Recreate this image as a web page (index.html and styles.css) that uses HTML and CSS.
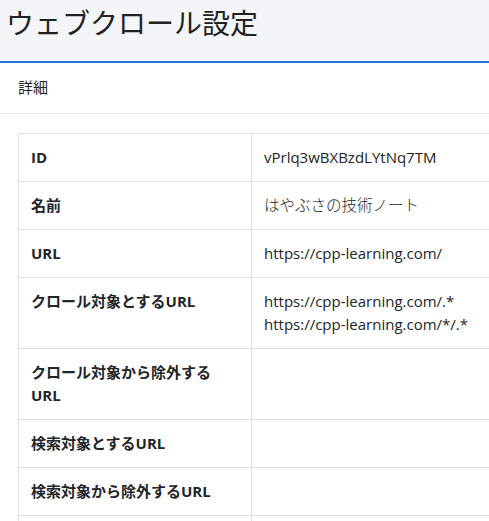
FILE: index.html
```html
<!DOCTYPE html>
<html lang="ja">
<head>
<meta charset="utf-8">
<title>ウェブクロール設定</title>
<link rel="stylesheet" href="styles.css">
</head>
<body>
<div class="page">
  <header class="page-header">
    <h1 class="page-title">ウェブクロール設定</h1>
  </header>
  <section class="card">
    <div class="card-header">詳細</div>
    <div class="card-body">
      <table class="detail-table">
        <tbody>
          <tr><th>ID</th><td>vPrlq3wBXBzdLYtNq7TM</td></tr>
          <tr><th>名前</th><td class="jp">はやぶさの技術ノート</td></tr>
          <tr><th>URL</th><td>https://cpp-learning.com/</td></tr>
          <tr><th>クロール対象とするURL</th><td>https://cpp-learning.com/.*<br>https://cpp-learning.com/*/.*</td></tr>
          <tr><th>クロール対象から除外するURL</th><td></td></tr>
          <tr><th>検索対象とするURL</th><td></td></tr>
          <tr><th>検索対象から除外するURL</th><td></td></tr>
          <tr><th>&nbsp;</th><td></td></tr>
        </tbody>
      </table>
    </div>
  </section>
</div>
</body>
</html>
```

FILE: styles.css
```css
html, body {
  margin: 0;
  padding: 0;
  background: #ffffff;
}
body {
  font-family: "Open Sans", "Noto Sans CJK JP", sans-serif;
  color: #212529;
  overflow: hidden;
}
.page {
  width: 489px;
  overflow: hidden;
}
.page-header {
  background: #f3f5f8;
  height: 61px;
  border-bottom: 2px solid #2379d6;
  box-sizing: content-box;
}
.page-title {
  margin: 0;
  padding: 5px 0 0 6px;
  font-size: 28px;
  font-weight: 400;
  line-height: 36px;
  color: #222;
}
.card-header {
  height: 51px;
  box-sizing: border-box;
  display: flex;
  align-items: center;
  padding: 0 0 3px 18px;
  font-size: 15px;
  border-bottom: 1px solid #e3e5e8;
}
.card-body {
  padding: 19px 0 0 18px;
}
.detail-table {
  border-collapse: collapse;
  width: 600px;
  font-size: 15px;
  line-height: 23px;
}
.detail-table th,
.detail-table td {
  border: 1px solid #dfe1e4;
  padding: 12px 12px;
  vertical-align: top;
  text-align: left;
}
.detail-table th {
  width: 208px;
  font-weight: 700;
}
.detail-table td {
  font-weight: 400;
}
.detail-table td.jp {
  font-size: 15.5px;
  font-weight: 300;
}
```
